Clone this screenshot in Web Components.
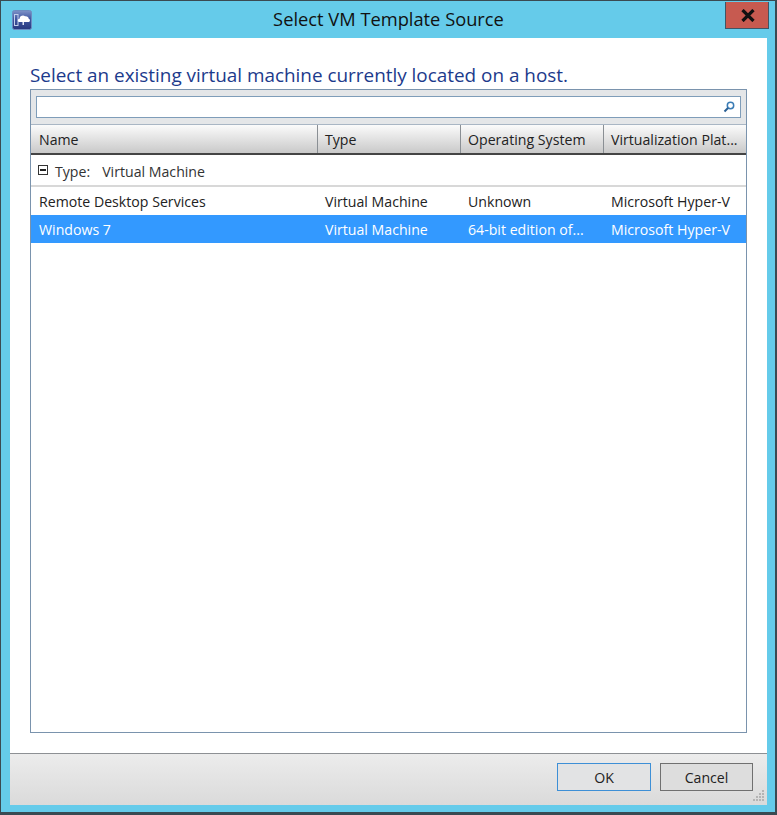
<!DOCTYPE html>
<html>
<head>
<meta charset="utf-8">
<title>Select VM Template Source</title>
<style>
html, body { margin: 0; padding: 0; background: #3a4a52; }
body { font-family: "Open Sans", "Liberation Sans", sans-serif; }
</style>
</head>
<body>
<vm-dialog>
    <span slot="title">Select VM Template Source</span>
    <span slot="heading">Select an existing virtual machine currently located on a host.</span>
    <vm-grid></vm-grid>
    <dialog-button slot="buttons" focused>OK</dialog-button>
    <dialog-button slot="buttons" style="width: 93px">Cancel</dialog-button>
</vm-dialog>

<script>
const vmColumns = ["Name", "Type", "Operating System", "Virtualization Plat..."];
const vmRows = [
    { cells: ["Remote Desktop Services", "Virtual Machine", "Unknown", "Microsoft Hyper-V"] },
    { cells: ["Windows 7", "Virtual Machine", "64-bit edition of...", "Microsoft Hyper-V"], selected: true },
];

class VmDialog extends HTMLElement {
    constructor() {
        super();
        this.attachShadow({ mode: "open" });
        this.shadowRoot.innerHTML = `
      <style>
        :host {
          display: flex;
          flex-direction: column;
          box-sizing: border-box;
          width: 777px;
          height: 815px;
          padding: 1px 2px 3px 1px;
        }
        .frame {
          flex: 1;
          display: flex;
          flex-direction: column;
          min-height: 0;
          background: #65cbea;
          padding: 0 8px 7px 9px;
        }
        .titlebar {
          flex: 0 0 37px;
          display: flex;
          position: relative;
          align-items: center;
          justify-content: center;
          color: #111;
          font-size: 18.3px;
          padding-bottom: 2px;
          box-sizing: border-box;
        }
        .app-icon { position: absolute; left: 2px; top: 9px; width: 20px; height: 20px; }
        .close {
          position: absolute;
          right: -2px;
          top: 1px;
          box-sizing: border-box;
          width: 44px;
          height: 27px;
          background: #c75a50;
          border: 1px solid #3f5565;
          border-top: 0;
          display: flex;
          align-items: center;
          justify-content: center;
          padding-left: 2px;
        }
        .body {
          flex: 1;
          display: flex;
          flex-direction: column;
          min-height: 0;
          background: #fff;
          padding: 23px 20px 20px 20px;
          box-sizing: border-box;
        }
        .heading {
          color: #1c3a8c;
          font-size: 18.9px;
          line-height: 28px;
          white-space: nowrap;
        }
        ::slotted(vm-grid) { flex: 1; min-height: 0; }
        .footer {
          flex: 0 0 52px;
          box-sizing: border-box;
          border-top: 1px solid #8d9094;
          background: linear-gradient(#ececec, #dadada);
          display: flex;
          justify-content: flex-end;
          align-items: flex-start;
          gap: 9px;
          padding: 9px 14px 0 0;
          position: relative;
        }
        .grip { position: absolute; right: 1px; bottom: 1px; width: 15px; height: 15px; }
      </style>
      <div class="frame">
        <div class="titlebar">
          <svg class="app-icon" viewBox="0 0 20 20">
            <defs>
              <linearGradient id="tile" x1="0" y1="0" x2="0" y2="1">
                <stop offset="0" stop-color="#7f93c8"/>
                <stop offset="0.45" stop-color="#3f56a0"/>
                <stop offset="1" stop-color="#27397f"/>
              </linearGradient>
            </defs>
            <rect x="0.5" y="0.5" width="19" height="19" rx="2" fill="url(#tile)" stroke="#6d8cc0"/>
            <rect x="2.500" y="4.500" width="3.500" height="11" fill="none" stroke="#c3cfea" stroke-width="1"/>
            <path d="M7.500 12c-2.200 0-2.200-3.200 0-3.300.2-2.600 3.500-4 5.500-2.400 1.800-.5 3.700.8 3.700 2.400 1.800.3 1.700 3.300-.2 3.300z" fill="#fff"/>
            <rect x="10.500" y="12" width="1.500" height="3" fill="#dfe6f6"/>
          </svg>
          <slot name="title"></slot>
          <div class="close">
            <svg width="14" height="13" viewBox="0 0 14 13">
              <path d="M1.500 1 12.500 12M12.500 1 1.500 12" stroke="#111" stroke-width="3.200" fill="none"/>
            </svg>
          </div>
        </div>
        <div class="body">
          <div class="heading"><slot name="heading"></slot></div>
          <slot></slot>
        </div>
        <div class="footer">
          <slot name="buttons"></slot>
          <svg class="grip" viewBox="0 0 15 15" fill="#b4b4b4">
            <rect x="11" y="1" width="2" height="2"/>
            <rect x="8" y="4" width="2" height="2"/><rect x="11" y="4" width="2" height="2"/>
            <rect x="5" y="7" width="2" height="2"/><rect x="8" y="7" width="2" height="2"/><rect x="11" y="7" width="2" height="2"/>
            <rect x="2" y="10" width="2" height="2"/><rect x="5" y="10" width="2" height="2"/><rect x="8" y="10" width="2" height="2"/><rect x="11" y="10" width="2" height="2"/>
          </svg>
        </div>
      </div>
    `;
    }
}

class VmGrid extends HTMLElement {
    constructor() {
        super();
        this.attachShadow({ mode: "open" });
        const row = (cells, cls) => `<div class="row ${cls}">${cells.map((c) => `<div class="cell">${c}</div>`).join("")}</div>`;
        this.shadowRoot.innerHTML = `
      <style>
        :host {
          display: flex;
          flex-direction: column;
          box-sizing: border-box;
          border: 1px solid #7a93ad;
          background: #fff;
          font-size: 14.15px;
          color: #222;
        }
        .search {
          flex: 0 0 35px;
          box-sizing: border-box;
          background: #e4e6e8;
          padding: 6px 5px 6px 5px;
          border-bottom: 1px solid #a9b6c4;
        }
        .search-box {
          height: 22px;
          box-sizing: border-box;
          background: #fff;
          border: 1px solid #7f9db9;
          display: flex;
          justify-content: flex-end;
          align-items: center;
          padding-right: 5px;
        }
        .row { display: grid; grid-template-columns: 287px 143px 143px 1fr; align-items: center; }
        .head {
          flex: 0 0 30px;
          box-sizing: border-box;
          background: linear-gradient(#fbfbfb, #c9c9c9);
          border-bottom: 2px solid #444;
          align-items: stretch;
        }
        .head .cell { display: flex; align-items: center; border-right: 1px solid #8a8f94; padding-top: 1px; }
        .head .cell:last-child { border-right: 0; }
        .cell { padding-left: 8px; white-space: nowrap; overflow: hidden; box-sizing: border-box; }
        .row .cell:nth-child(n+2) { padding-left: 7px; }
        .group {
          flex: 0 0 32px;
          box-sizing: border-box;
          border-bottom: 2px solid #d8d8d8;
          display: flex;
          align-items: center;
          padding: 2px 0 0 7px;
          color: #333;
        }
        .toggle { width: 8px; height: 8px; border: 1px solid #333; position: relative; margin-right: 7px; margin-bottom: 3px; }
        .toggle::after { content: ""; position: absolute; left: 1px; right: 1px; top: 3px; height: 2px; background: #222; }
        .group .label { margin-right: 12px; }
        .data { flex: 0 0 28px; box-sizing: border-box; padding-top: 1px; }
        .selected { background: #3399ff; color: #fff; }
      </style>
      <div class="search">
        <div class="search-box">
          <svg width="12" height="12" viewBox="0 0 12 12">
            <circle cx="7.500" cy="4.500" r="3.200" fill="none" stroke="#3a7cb5" stroke-width="1.500"/>
            <path d="M5 7 1.500 10.500" stroke="#2a5f94" stroke-width="2"/>
          </svg>
        </div>
      </div>
      ${row(vmColumns, "head")}
      <div class="group"><span class="toggle"></span><span class="label">Type:</span><span>Virtual Machine</span></div>
      ${vmRows.map((r) => row(r.cells, "data" + (r.selected ? " selected" : ""))).join("")}
    `;
    }
}

class DialogButton extends HTMLElement {
    constructor() {
        super();
        this.attachShadow({ mode: "open" });
        this.shadowRoot.innerHTML = `
      <style>
        :host {
          display: flex;
          align-items: center;
          justify-content: center;
          box-sizing: border-box;
          width: 94px;
          height: 28px;
          background: #dddddd;
          border: 1px solid #707070;
          color: #222;
          font-size: 14.15px;
        }
        :host([focused]) { border-color: #3d8fd6; background: #e2e3e4; }
      </style>
      <slot></slot>
    `;
    }
}

customElements.define("vm-dialog", VmDialog);
customElements.define("vm-grid", VmGrid);
customElements.define("dialog-button", DialogButton);
</script>
</body>
</html>
